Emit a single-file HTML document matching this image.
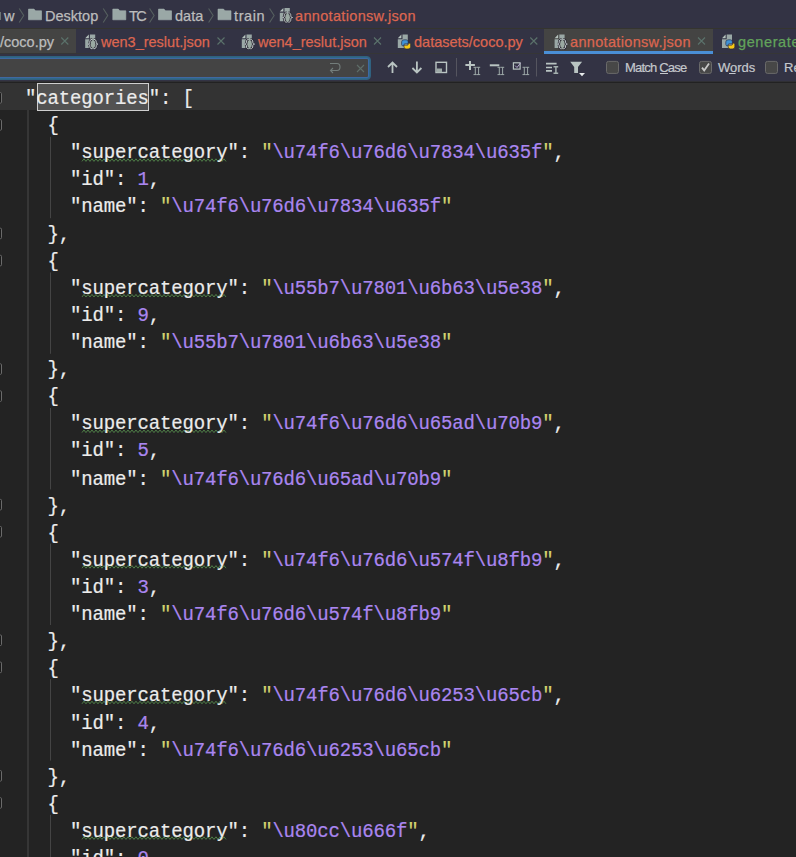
<!DOCTYPE html>
<html><head><meta charset="utf-8">
<style>
html,body{margin:0;padding:0}
body{width:796px;height:857px;overflow:hidden;background:#232323;position:relative;font-family:"Liberation Sans",sans-serif}
.a{position:absolute;display:block}
.bar{left:0;width:796px}
.nt{position:absolute;white-space:pre;font-size:14.5px;line-height:20px;color:#bcbcbc;-webkit-text-stroke:0.25px currentColor}
.red{color:#dc6650}
.grn{color:#62a35b}
svg{position:absolute;overflow:visible}
#code{position:absolute;left:2.6px;top:86.3px;font-family:"Liberation Mono",monospace;font-size:19px;letter-spacing:-0.162px;line-height:25.1111px;color:#ececec;white-space:pre;transform-origin:0 0;transform:scaleY(1.08);-webkit-text-stroke:0.2px #ececec}
.ln{height:25.1111px}
.p{color:#aa86f0;-webkit-text-stroke:0.2px #aa86f0}
.q{color:#d3d470;-webkit-text-stroke:0.2px #d3d470}
.tb{position:absolute;white-space:pre;font-size:13px;line-height:16px;color:#c4c8cc;-webkit-text-stroke:0.2px currentColor}
</style></head><body>
<!-- nav bar -->
<div class="a bar" style="top:0;height:28px;background:#333344"></div>
<div class="a bar" style="top:28px;height:1px;background:#35352f"></div>
<!-- tab row -->
<div class="a bar" style="top:29px;height:24px;background:#333344"></div>
<div class="a bar" style="top:53px;height:1px;background:#363636"></div>
<!-- toolbar -->
<div class="a bar" style="top:54px;height:27px;background:#333344"></div>
<div class="a bar" style="top:81px;height:1px;background:#303034"></div>
<div class="a bar" style="top:82px;height:1px;background:#222222"></div>
<!-- caret row -->
<div class="a bar" style="top:83px;height:27px;background:#333333"></div>
<!-- selection box -->
<div class="a" style="left:37px;top:83px;width:110px;height:26px;border:1px solid #cfcfcf;background:#525252"></div>

<!-- nav contents -->
<svg style="left:0;top:0" width="796" height="28">
  <defs>
    <g id="chev"><polyline points="0,0 4.5,7 0,14" fill="none" stroke="#56605f" stroke-width="1.1"/></g>
    <g id="fold"><path d="M0.5,0.5 H6 L7.5,2.2 H13.5 V11.2 H0.5 Z" fill="#9aa8a6" stroke="#a4b2b0" stroke-width="0.6"/></g>
    <g id="doc">
      <path d="M0,3.6 L3.6,0 V3.6 Z" fill="#b5c2bd"/>
      <path d="M4.7,0 H10 V13.3 H0 V4.7 H4.7 Z" fill="#9aa8a6"/>
    </g>
    <g id="json">
      <use href="#doc"/>
      <ellipse cx="7.8" cy="9.5" rx="4.6" ry="4.8" fill="#9aa9a2"/>
      <path d="M7,4.8 C5,4.8 4.6,6 4.6,7.6 C4.6,8.8 4,9.5 2.9,9.5 C4,9.5 4.6,10.2 4.6,11.4 C4.6,13 5,14.2 7,14.2 M8.6,4.8 C10.6,4.8 11,6 11,7.6 C11,8.8 11.6,9.5 12.7,9.5 C11.6,9.5 11,10.2 11,11.4 C11,13 10.6,14.2 8.6,14.2" fill="none" stroke="#2c2a33" stroke-width="2.4"/>
      <path d="M7,4.8 C5,4.8 4.6,6 4.6,7.6 C4.6,8.8 4,9.5 2.9,9.5 C4,9.5 4.6,10.2 4.6,11.4 C4.6,13 5,14.2 7,14.2 M8.6,4.8 C10.6,4.8 11,6 11,7.6 C11,8.8 11.6,9.5 12.7,9.5 C11.6,9.5 11,10.2 11,11.4 C11,13 10.6,14.2 8.6,14.2" fill="none" stroke="#c3cbd0" stroke-width="1"/>
    </g>
    <g id="py">
      <use href="#doc"/>
      <path d="M3.8,9.8 V7.3 Q3.8,5.2 6.3,5.2 H8.3 Q10.4,5.2 10.4,7.3 V9.2 H7 Q6.2,9.2 6.2,10.2 V11.2 H5 Q3.8,11.2 3.8,9.8 Z" fill="#3f92d6" stroke="#25253a" stroke-width="0.6"/>
      <path d="M12.8,10 V12.3 Q12.8,14.3 10.3,14.3 H8.3 Q6.2,14.3 6.2,12.3 V10.6 H9.6 Q10.4,10.6 10.4,9.6 V8.6 H11.6 Q12.8,8.6 12.8,10 Z" fill="#f6c915" stroke="#25253a" stroke-width="0.6"/>
    </g>
    <g id="x"><path d="M0,0 L7,7 M7,0 L0,7" stroke="#5b726b" stroke-width="1.1"/></g>
  </defs>
  <rect x="-2" y="12" width="3" height="8" fill="#6d7574"/>
  <use href="#chev" x="19.2" y="8.5"/>
  <use href="#fold" x="28" y="8.6"/>
  <use href="#chev" x="103.2" y="8.5"/>
  <use href="#fold" x="112.3" y="8.6"/>
  <use href="#chev" x="149.6" y="8.5"/>
  <use href="#fold" x="158" y="8.6"/>
  <use href="#chev" x="208.6" y="8.5"/>
  <use href="#fold" x="217.5" y="8.6"/>
  <use href="#chev" x="269.6" y="8.5"/>
  <use href="#json" x="279.8" y="8"/>
</svg>
<span class="nt" style="left:4px;top:6px;letter-spacing:0.5px">w</span>
<span class="nt" style="left:45px;top:6px">Desktop</span>
<span class="nt" style="left:129px;top:6px;letter-spacing:-1.5px">TC</span>
<span class="nt" style="left:175px;top:6px">data</span>
<span class="nt" style="left:234px;top:6px;letter-spacing:0.6px">train</span>
<span class="nt red" style="left:295px;top:6px;letter-spacing:0.33px">annotationsw.json</span>

<!-- tabs -->
<div class="a" style="left:0;top:29px;width:76px;height:24px;background:#444443"></div>
<div class="a" style="left:544px;top:29px;width:169px;height:22px;background:#444443"></div>
<div class="a" style="left:544px;top:51px;width:169px;height:3px;background:#4a8fd6"></div>
<svg style="left:0;top:0" width="796" height="60">
  <use href="#x" x="61.3" y="37.5"/>
  <use href="#json" x="85.2" y="34.6"/>
  <use href="#x" x="217.5" y="37.5"/>
  <use href="#json" x="241.8" y="34.6"/>
  <use href="#x" x="374" y="37.5"/>
  <use href="#py" x="397.8" y="34.6"/>
  <use href="#x" x="530.3" y="37.5"/>
  <use href="#json" x="554.6" y="34.6"/>
  <use href="#x" x="698" y="37.5"/>
  <use href="#py" x="722" y="34.6"/>
</svg>
<span class="nt" style="left:0px;top:32px">/coco.py</span>
<span class="nt red" style="left:101px;top:32px">wen3_reslut.json</span>
<span class="nt red" style="left:258px;top:32px">wen4_reslut.json</span>
<span class="nt red" style="left:414px;top:32px">datasets/coco.py</span>
<span class="nt red" style="left:570px;top:32px;letter-spacing:0.33px">annotationsw.json</span>
<span class="nt grn" style="left:738px;top:32px;letter-spacing:0.6px">generate</span>

<!-- search field -->
<div class="a" style="left:-10px;top:56px;width:379px;height:22px;border:1px solid #30617f;border-radius:4px;background:#444444;box-shadow:inset 0 0 0 1px #2f6889, inset 0 0 0 2px #3f68a2"></div>
<svg style="left:0;top:0" width="796" height="82">
  <!-- enter icon -->
  <path d="M330,63.5 H337 Q340,63.5 340,67 Q340,70.5 337,70.5 H330.5 M333,68 L330.5,70.5 L333,73" fill="none" stroke="#737d7b" stroke-width="1.1"/>
  <path d="M357,65 L364,72 M364,65 L357,72" stroke="#5f6e69" stroke-width="1.1"/>
  <!-- up / down -->
  <path d="M392.5,62.5 V73 M388,67 L392.5,62.5 L397,67" fill="none" stroke="#b9c4c2" stroke-width="1.8"/>
  <path d="M416.9,61.6 V72.5 M412.4,68 L416.9,72.5 L421.4,68" fill="none" stroke="#b9c4c2" stroke-width="1.8"/>
  <rect x="436" y="62.3" width="10.5" height="10.2" fill="none" stroke="#b9c4c2" stroke-width="1.4"/>
  <rect x="436.5" y="68.5" width="5.5" height="3.8" fill="#9eaaa8"/>
  <rect x="456" y="58" width="1" height="18.5" fill="#55555f"/>
  <!-- +II -->
  <path d="M465.4,65.1 H474.9 M470,61 V70" stroke="#b9c4c2" stroke-width="2"/>
  <g id="ii" fill="none" stroke="#a9b5b3" stroke-width="0.9">
    <path d="M475.3,67.5 V74.5 M478.6,67.5 V74.5 M473.5,67.3 H476.8 M477,67.3 H480.2 M473.5,74.6 H476.8 M477,74.6 H480.2"/>
  </g>
  <path d="M489.8,65.3 H499.3" stroke="#b9c4c2" stroke-width="2"/>
  <use href="#ii" x="24"/>
  <rect x="513.4" y="62.8" width="6.7" height="6.3" fill="none" stroke="#b9c4c2" stroke-width="1.2"/>
  <path d="M515,65.5 L517,67.5 L520.5,63" fill="none" stroke="#b7a8d0" stroke-width="1"/>
  <use href="#ii" x="49"/>
  <rect x="536" y="58" width="1" height="18.5" fill="#55555f"/>
  <!-- lines + I -->
  <path d="M546,63.7 H556.6 M546,67.5 H552 M546,70.9 H552" stroke="#b9c4c2" stroke-width="1.7"/>
  <path d="M553.5,66.7 H558.2 M555.9,67 V73 M553.5,73.3 H558.2" stroke="#a5b1af" stroke-width="1.5"/>
  <!-- funnel -->
  <path d="M570.2,61.7 H582.1 L578,67 V73 H574.2 V67 Z" fill="#b9c4c2"/>
  <path d="M579,73 H585 L582,76.2 Z" fill="#e8ecec"/>
  <!-- checkboxes -->
  <rect x="606.5" y="61.4" width="12" height="12" rx="2" fill="#474747" stroke="#6a6a6a" stroke-width="1"/>
  <rect x="699.5" y="61.4" width="12" height="12" rx="2" fill="#474747" stroke="#6a6a6a" stroke-width="1"/>
  <path d="M702,67.6 L704.2,70.4 L709,63.6" fill="none" stroke="#c8c8c8" stroke-width="1.8"/>
  <rect x="765.5" y="61.4" width="12" height="12" rx="2" fill="#474747" stroke="#6a6a6a" stroke-width="1"/>
  <!-- mnemonic underlines -->
  <rect x="660" y="73" width="8" height="1" fill="#c4c8cc"/>
  <rect x="729" y="73" width="6.6" height="1" fill="#c4c8cc"/>
</svg>
<span class="tb" style="left:625px;top:60px;letter-spacing:-0.8px">Match Case</span>
<span class="tb" style="left:718px;top:60px">Words</span>
<span class="tb" style="left:784px;top:60px">Re</span>

<svg style="left:0;top:0" width="796" height="857"><rect x="-9.5" y="92.6" width="11" height="10.5" fill="#1b1b1b" stroke="#6b6b6b" stroke-width="1" rx="1"/><rect x="-9.5" y="119.7" width="11" height="10.5" fill="#1b1b1b" stroke="#6b6b6b" stroke-width="1" rx="1"/><rect x="50" y="136.8" width="1" height="81.4" fill="#444444"/><polyline points="81.97,161.40 83.97,158.80 85.97,161.40 87.97,158.80 89.97,161.40 91.97,158.80 93.97,161.40 95.97,158.80 97.97,161.40 99.97,158.80 101.97,161.40 103.97,158.80 105.97,161.40 107.97,158.80 109.97,161.40 111.97,158.80 113.97,161.40 115.97,158.80 117.97,161.40 119.97,158.80 121.97,161.40 123.97,158.80 125.97,161.40 127.97,158.80 129.97,161.40 131.97,158.80 133.97,161.40 135.97,158.80 137.97,161.40 139.97,158.80 141.97,161.40 143.97,158.80 145.97,161.40 147.97,158.80 149.97,161.40 151.97,158.80 153.97,161.40 155.97,158.80 157.97,161.40 159.97,158.80 161.97,161.40 163.97,158.80 165.97,161.40 167.97,158.80 169.97,161.40 171.97,158.80 173.97,161.40 175.97,158.80 177.97,161.40 179.97,158.80 181.97,161.40 183.97,158.80 185.97,161.40 187.97,158.80 189.97,161.40 191.97,158.80 193.97,161.40 195.97,158.80 197.97,161.40 199.97,158.80 201.97,161.40 203.97,158.80 205.97,161.40 207.97,158.80 209.97,161.40 211.97,158.80 213.97,161.40 215.97,158.80 217.97,161.40 219.97,158.80 221.97,161.40 223.97,158.80 225.97,161.40" fill="none" stroke="#4f7f48" stroke-width="1"/><rect x="-9.5" y="228.2" width="11" height="10.5" fill="#1b1b1b" stroke="#6b6b6b" stroke-width="1" rx="1"/><rect x="-9.5" y="255.3" width="11" height="10.5" fill="#1b1b1b" stroke="#6b6b6b" stroke-width="1" rx="1"/><rect x="50" y="272.4" width="1" height="81.4" fill="#444444"/><polyline points="81.97,297.00 83.97,294.40 85.97,297.00 87.97,294.40 89.97,297.00 91.97,294.40 93.97,297.00 95.97,294.40 97.97,297.00 99.97,294.40 101.97,297.00 103.97,294.40 105.97,297.00 107.97,294.40 109.97,297.00 111.97,294.40 113.97,297.00 115.97,294.40 117.97,297.00 119.97,294.40 121.97,297.00 123.97,294.40 125.97,297.00 127.97,294.40 129.97,297.00 131.97,294.40 133.97,297.00 135.97,294.40 137.97,297.00 139.97,294.40 141.97,297.00 143.97,294.40 145.97,297.00 147.97,294.40 149.97,297.00 151.97,294.40 153.97,297.00 155.97,294.40 157.97,297.00 159.97,294.40 161.97,297.00 163.97,294.40 165.97,297.00 167.97,294.40 169.97,297.00 171.97,294.40 173.97,297.00 175.97,294.40 177.97,297.00 179.97,294.40 181.97,297.00 183.97,294.40 185.97,297.00 187.97,294.40 189.97,297.00 191.97,294.40 193.97,297.00 195.97,294.40 197.97,297.00 199.97,294.40 201.97,297.00 203.97,294.40 205.97,297.00 207.97,294.40 209.97,297.00 211.97,294.40 213.97,297.00 215.97,294.40 217.97,297.00 219.97,294.40 221.97,297.00 223.97,294.40 225.97,297.00" fill="none" stroke="#4f7f48" stroke-width="1"/><rect x="-9.5" y="363.8" width="11" height="10.5" fill="#1b1b1b" stroke="#6b6b6b" stroke-width="1" rx="1"/><rect x="-9.5" y="390.9" width="11" height="10.5" fill="#1b1b1b" stroke="#6b6b6b" stroke-width="1" rx="1"/><rect x="50" y="408.0" width="1" height="81.4" fill="#444444"/><polyline points="81.97,432.60 83.97,430.00 85.97,432.60 87.97,430.00 89.97,432.60 91.97,430.00 93.97,432.60 95.97,430.00 97.97,432.60 99.97,430.00 101.97,432.60 103.97,430.00 105.97,432.60 107.97,430.00 109.97,432.60 111.97,430.00 113.97,432.60 115.97,430.00 117.97,432.60 119.97,430.00 121.97,432.60 123.97,430.00 125.97,432.60 127.97,430.00 129.97,432.60 131.97,430.00 133.97,432.60 135.97,430.00 137.97,432.60 139.97,430.00 141.97,432.60 143.97,430.00 145.97,432.60 147.97,430.00 149.97,432.60 151.97,430.00 153.97,432.60 155.97,430.00 157.97,432.60 159.97,430.00 161.97,432.60 163.97,430.00 165.97,432.60 167.97,430.00 169.97,432.60 171.97,430.00 173.97,432.60 175.97,430.00 177.97,432.60 179.97,430.00 181.97,432.60 183.97,430.00 185.97,432.60 187.97,430.00 189.97,432.60 191.97,430.00 193.97,432.60 195.97,430.00 197.97,432.60 199.97,430.00 201.97,432.60 203.97,430.00 205.97,432.60 207.97,430.00 209.97,432.60 211.97,430.00 213.97,432.60 215.97,430.00 217.97,432.60 219.97,430.00 221.97,432.60 223.97,430.00 225.97,432.60" fill="none" stroke="#4f7f48" stroke-width="1"/><rect x="-9.5" y="499.4" width="11" height="10.5" fill="#1b1b1b" stroke="#6b6b6b" stroke-width="1" rx="1"/><rect x="-9.5" y="526.5" width="11" height="10.5" fill="#1b1b1b" stroke="#6b6b6b" stroke-width="1" rx="1"/><rect x="50" y="543.6" width="1" height="81.4" fill="#444444"/><polyline points="81.97,568.20 83.97,565.60 85.97,568.20 87.97,565.60 89.97,568.20 91.97,565.60 93.97,568.20 95.97,565.60 97.97,568.20 99.97,565.60 101.97,568.20 103.97,565.60 105.97,568.20 107.97,565.60 109.97,568.20 111.97,565.60 113.97,568.20 115.97,565.60 117.97,568.20 119.97,565.60 121.97,568.20 123.97,565.60 125.97,568.20 127.97,565.60 129.97,568.20 131.97,565.60 133.97,568.20 135.97,565.60 137.97,568.20 139.97,565.60 141.97,568.20 143.97,565.60 145.97,568.20 147.97,565.60 149.97,568.20 151.97,565.60 153.97,568.20 155.97,565.60 157.97,568.20 159.97,565.60 161.97,568.20 163.97,565.60 165.97,568.20 167.97,565.60 169.97,568.20 171.97,565.60 173.97,568.20 175.97,565.60 177.97,568.20 179.97,565.60 181.97,568.20 183.97,565.60 185.97,568.20 187.97,565.60 189.97,568.20 191.97,565.60 193.97,568.20 195.97,565.60 197.97,568.20 199.97,565.60 201.97,568.20 203.97,565.60 205.97,568.20 207.97,565.60 209.97,568.20 211.97,565.60 213.97,568.20 215.97,565.60 217.97,568.20 219.97,565.60 221.97,568.20 223.97,565.60 225.97,568.20" fill="none" stroke="#4f7f48" stroke-width="1"/><rect x="-9.5" y="635.0" width="11" height="10.5" fill="#1b1b1b" stroke="#6b6b6b" stroke-width="1" rx="1"/><rect x="-9.5" y="662.1" width="11" height="10.5" fill="#1b1b1b" stroke="#6b6b6b" stroke-width="1" rx="1"/><rect x="50" y="679.2" width="1" height="81.4" fill="#444444"/><polyline points="81.97,703.80 83.97,701.20 85.97,703.80 87.97,701.20 89.97,703.80 91.97,701.20 93.97,703.80 95.97,701.20 97.97,703.80 99.97,701.20 101.97,703.80 103.97,701.20 105.97,703.80 107.97,701.20 109.97,703.80 111.97,701.20 113.97,703.80 115.97,701.20 117.97,703.80 119.97,701.20 121.97,703.80 123.97,701.20 125.97,703.80 127.97,701.20 129.97,703.80 131.97,701.20 133.97,703.80 135.97,701.20 137.97,703.80 139.97,701.20 141.97,703.80 143.97,701.20 145.97,703.80 147.97,701.20 149.97,703.80 151.97,701.20 153.97,703.80 155.97,701.20 157.97,703.80 159.97,701.20 161.97,703.80 163.97,701.20 165.97,703.80 167.97,701.20 169.97,703.80 171.97,701.20 173.97,703.80 175.97,701.20 177.97,703.80 179.97,701.20 181.97,703.80 183.97,701.20 185.97,703.80 187.97,701.20 189.97,703.80 191.97,701.20 193.97,703.80 195.97,701.20 197.97,703.80 199.97,701.20 201.97,703.80 203.97,701.20 205.97,703.80 207.97,701.20 209.97,703.80 211.97,701.20 213.97,703.80 215.97,701.20 217.97,703.80 219.97,701.20 221.97,703.80 223.97,701.20 225.97,703.80" fill="none" stroke="#4f7f48" stroke-width="1"/><rect x="-9.5" y="770.6" width="11" height="10.5" fill="#1b1b1b" stroke="#6b6b6b" stroke-width="1" rx="1"/><rect x="-9.5" y="797.7" width="11" height="10.5" fill="#1b1b1b" stroke="#6b6b6b" stroke-width="1" rx="1"/><rect x="50" y="814.8" width="1" height="42.2" fill="#444444"/><polyline points="81.97,839.40 83.97,836.80 85.97,839.40 87.97,836.80 89.97,839.40 91.97,836.80 93.97,839.40 95.97,836.80 97.97,839.40 99.97,836.80 101.97,839.40 103.97,836.80 105.97,839.40 107.97,836.80 109.97,839.40 111.97,836.80 113.97,839.40 115.97,836.80 117.97,839.40 119.97,836.80 121.97,839.40 123.97,836.80 125.97,839.40 127.97,836.80 129.97,839.40 131.97,836.80 133.97,839.40 135.97,836.80 137.97,839.40 139.97,836.80 141.97,839.40 143.97,836.80 145.97,839.40 147.97,836.80 149.97,839.40 151.97,836.80 153.97,839.40 155.97,836.80 157.97,839.40 159.97,836.80 161.97,839.40 163.97,836.80 165.97,839.40 167.97,836.80 169.97,839.40 171.97,836.80 173.97,839.40 175.97,836.80 177.97,839.40 179.97,836.80 181.97,839.40 183.97,836.80 185.97,839.40 187.97,836.80 189.97,839.40 191.97,836.80 193.97,839.40 195.97,836.80 197.97,839.40 199.97,836.80 201.97,839.40 203.97,836.80 205.97,839.40 207.97,836.80 209.97,839.40 211.97,836.80 213.97,839.40 215.97,836.80 217.97,839.40 219.97,836.80 221.97,839.40 223.97,836.80 225.97,839.40" fill="none" stroke="#4f7f48" stroke-width="1"/><rect x="27" y="109.7" width="2" height="747.3" fill="#363636"/></svg>
<div id="code"><div class="ln">  "categories": [</div><div class="ln">    {</div><div class="ln">      "supercategory": <span class="q">"</span><span class="p">\u74f6\u76d6\u7834\u635f</span><span class="q">"</span>,</div><div class="ln">      "id": <span class="p">1</span>,</div><div class="ln">      "name": <span class="q">"</span><span class="p">\u74f6\u76d6\u7834\u635f</span><span class="q">"</span></div><div class="ln">    },</div><div class="ln">    {</div><div class="ln">      "supercategory": <span class="q">"</span><span class="p">\u55b7\u7801\u6b63\u5e38</span><span class="q">"</span>,</div><div class="ln">      "id": <span class="p">9</span>,</div><div class="ln">      "name": <span class="q">"</span><span class="p">\u55b7\u7801\u6b63\u5e38</span><span class="q">"</span></div><div class="ln">    },</div><div class="ln">    {</div><div class="ln">      "supercategory": <span class="q">"</span><span class="p">\u74f6\u76d6\u65ad\u70b9</span><span class="q">"</span>,</div><div class="ln">      "id": <span class="p">5</span>,</div><div class="ln">      "name": <span class="q">"</span><span class="p">\u74f6\u76d6\u65ad\u70b9</span><span class="q">"</span></div><div class="ln">    },</div><div class="ln">    {</div><div class="ln">      "supercategory": <span class="q">"</span><span class="p">\u74f6\u76d6\u574f\u8fb9</span><span class="q">"</span>,</div><div class="ln">      "id": <span class="p">3</span>,</div><div class="ln">      "name": <span class="q">"</span><span class="p">\u74f6\u76d6\u574f\u8fb9</span><span class="q">"</span></div><div class="ln">    },</div><div class="ln">    {</div><div class="ln">      "supercategory": <span class="q">"</span><span class="p">\u74f6\u76d6\u6253\u65cb</span><span class="q">"</span>,</div><div class="ln">      "id": <span class="p">4</span>,</div><div class="ln">      "name": <span class="q">"</span><span class="p">\u74f6\u76d6\u6253\u65cb</span><span class="q">"</span></div><div class="ln">    },</div><div class="ln">    {</div><div class="ln">      "supercategory": <span class="q">"</span><span class="p">\u80cc\u666f</span><span class="q">"</span>,</div><div class="ln">      "id": <span class="p">0</span>,</div></div>
</body></html>
